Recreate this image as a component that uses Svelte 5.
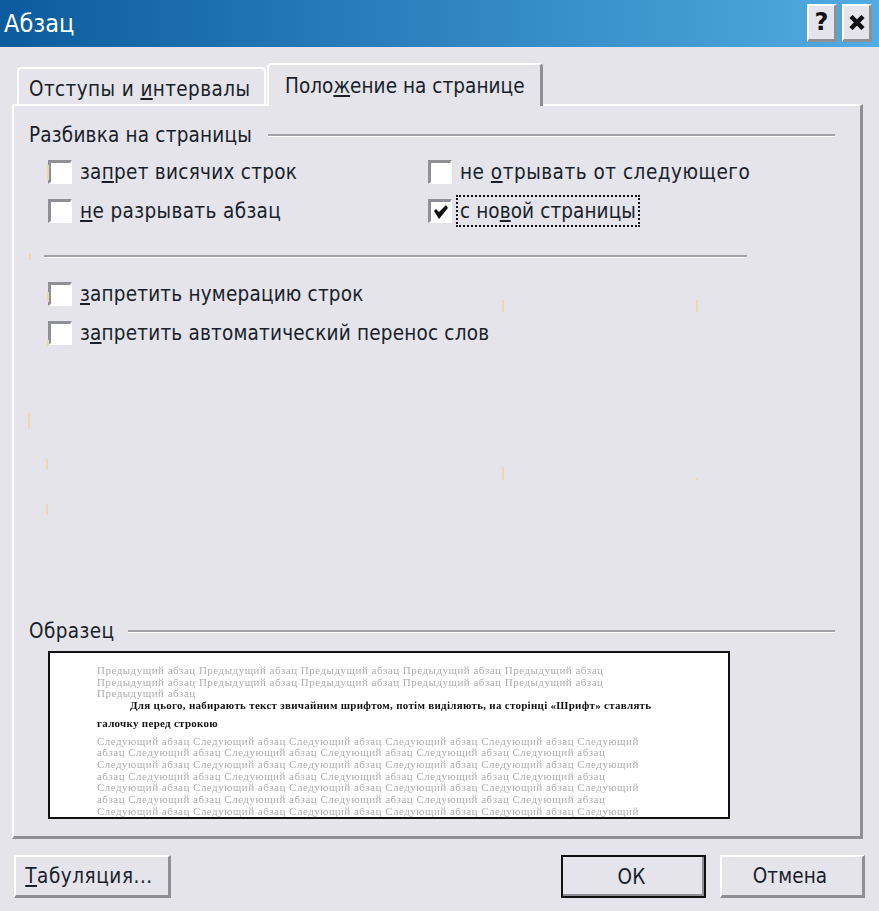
<script>
	const marks = [
		[47, 165, 15], [29, 254, 6], [47, 292, 10], [47, 340, 6], [502, 300, 12], [696, 300, 12],
		[28, 413, 16], [46, 459, 11], [46, 504, 11], [502, 467, 13], [696, 478, 2]
	];
	const prev = 'Предыдущий абзац';
	const next = 'Следующий абзац';
	const prevLines = [Array(5).fill(prev).join(' '), Array(5).fill(prev).join(' '), prev];
	const longLine = Array(5).fill(next).join(' ') + ' Следующий';
	const shortLine = 'абзац ' + Array(5).fill(next).join(' ');
	const nextLines = [longLine, shortLine, longLine, shortLine, longLine, shortLine, longLine];
</script>

<div class="dialog">
	<header class="titlebar">
		<span class="title">Абзац</span>
		<div class="caption-buttons">
			<button class="caption-btn help">?</button>
			<button class="caption-btn close" aria-label="Закрыть">
				<svg width="18" height="15" viewBox="0 0 18 15"><path d="M3 1.500l12 12M15 1.500l-12 12" fill="none" stroke="#111" stroke-width="4.500" /></svg>
			</button>
		</div>
	</header>

	<div class="tabs">
		<div class="tab">Отступы и <u>и</u>нтервалы</div>
		<div class="tab active">Поло<u>ж</u>ение на странице</div>
	</div>

	<section class="panel">
		<div class="legend first"><span>Разбивка на страницы</span><i class="rule"></i></div>
		<div class="check-grid">
			<label class="check"><span class="box"></span><span>за<u>п</u>рет висячих строк</span></label>
			<label class="check"><span class="box"></span><span class="wide">не <u>о</u>трывать от следующего</span></label>
			<label class="check"><span class="box"></span><span class="mid"><u>н</u>е разрывать абзац</span></label>
			<label class="check">
				<span class="box">
					<svg width="16" height="16" viewBox="0 0 16 16"><path d="M1 7l2-2 3 3 7-7 2 3-9 11z" fill="#111" /></svg>
				</span>
				<span class="focus">с но<u>в</u>ой страницы</span>
			</label>
		</div>
		<i class="rule separator"></i>
		<div class="check-list">
			<label class="check"><span class="box"></span><span><u>з</u>апретить нумерацию строк</span></label>
			<label class="check"><span class="box"></span><span>з<u>а</u>претить автоматический перенос слов</span></label>
		</div>

		<div class="legend sample"><span>Образец</span><i class="rule"></i></div>
		<div class="preview">
			{#each prevLines as line}
				<div class="line grey">{line}</div>
			{/each}
			<div class="line body indent">Для цього, набирають текст звичайним шрифтом, потім виділяють, на сторінці «Шрифт» ставлять</div>
			<div class="line body last">галочку перед строкою</div>
			{#each nextLines as line}
				<div class="line grey">{line}</div>
			{/each}
		</div>
	</section>

	<footer class="actions">
		<button class="btn tabs-btn"><u>Т</u>абуляция...</button>
		<div class="spacer"></div>
		<button class="btn default">ОК</button>
		<button class="btn">Отмена</button>
	</footer>

	{#each marks as [x, y, h]}
		<i class="mark" style="left:{x}px;top:{y}px;height:{h}px"></i>
	{/each}
</div>

<style>
	:global(body) {
		background: #e4e4ea;
	}

	.dialog {
		position: relative;
		width: 879px;
		height: 911px;
		overflow: hidden;
		display: flex;
		flex-direction: column;
		background: #e4e4ea;
		color: #1a1f2b;
		font-family: 'DejaVu Sans', 'Liberation Sans', sans-serif;
		font-stretch: condensed;
		font-size: 20.5px;
	}

	.titlebar {
		height: 47px;
		flex: none;
		display: flex;
		align-items: center;
		justify-content: space-between;
		padding: 0 7px 0 4px;
		box-sizing: border-box;
		background: linear-gradient(90deg, #0b5c9e, #52abe1);
	}

	.title {
		color: #fff;
		font-size: 25px;
	}

	.caption-buttons {
		display: flex;
		gap: 5px;
		position: relative;
		top: -1px;
	}

	.caption-btn {
		width: 30px;
		height: 38px;
		padding: 0;
		box-sizing: border-box;
		display: flex;
		align-items: center;
		justify-content: center;
		background: #e4e4ea;
		border: solid;
		border-width: 2px 3px 3px 2px;
		border-color: #fff #8f9096 #8f9096 #fff;
		font-family: 'DejaVu Sans', sans-serif;
		font-weight: 700;
		font-size: 24px;
		color: #111;
	}

	.tabs {
		height: 59px;
		flex: none;
		display: flex;
		align-items: flex-end;
		padding-left: 17px;
		position: relative;
		z-index: 1;
		margin-bottom: -2px;
	}

	.tab {
		height: 37px;
		width: 249px;
		box-sizing: border-box;
		padding: 8px 0 0 10px;
		border: solid #fff;
		border-width: 2px 2px 0 2px;
		border-radius: 4px 4px 0 0;
		margin-bottom: 2px;
		letter-spacing: 0.4px;
	}

	.tab.active {
		height: 43px;
		width: 276px;
		padding: 9px 0 0 16px;
		margin: 0 0 0 1px;
		background: #e4e4ea;
		border-right: 3px solid #8f9096;
		letter-spacing: 0.05px;
	}

	.panel {
		margin: 0 16px 0 12px;
		height: 735px;
		flex: none;
		box-sizing: border-box;
		padding: 17px 25px 0 15px;
		border: solid;
		border-width: 2px 3px 3px 2px;
		border-color: #fff #8f9096 #8f9096 #fff;
	}

	.legend {
		display: flex;
		align-items: center;
		gap: 16px;
		height: 24px;
		letter-spacing: 0.2px;
	}

	.sample {
		gap: 14px;
		letter-spacing: 0.4px;
		margin-top: 273px;
	}

	.rule {
		display: block;
		flex: 1;
		height: 2px;
		background: #a1a1a8;
		border-bottom: 1px solid #fff;
	}

	.check-grid {
		display: grid;
		grid-template-columns: 380px 1fr;
		row-gap: 13px;
		margin: 12px 0 0 19px;
	}

	.check-list {
		display: flex;
		flex-direction: column;
		gap: 13px;
		margin: 23px 0 0 19px;
	}

	.check {
		height: 26px;
		display: flex;
		align-items: center;
		gap: 8px;
		letter-spacing: 0.28px;
	}

	.check-list .check {
		letter-spacing: 0.2px;
	}

	.wide {
		letter-spacing: 0.52px;
	}

	.mid {
		letter-spacing: 0.38px;
	}

	.box {
		width: 24px;
		height: 24px;
		flex: none;
		box-sizing: border-box;
		display: flex;
		align-items: center;
		justify-content: center;
		background: #fff;
		border: solid;
		border-width: 3px 2px 2px 3px;
		border-color: #8f9096 #fff #fff #8f9096;
	}

	.focus {
		outline: 2px dotted #111;
		outline-offset: 2px;
		letter-spacing: 0.1px;
	}

	.separator {
		flex: none;
		margin: 31px 88px 0 15px;
		width: auto;
	}

	.preview {
		margin: 8px 0 0 19px;
		width: 682px;
		height: 168px;
		box-sizing: border-box;
		padding: 12px 0 0 47px;
		overflow: hidden;
		background: #fff;
		border: 2px solid #111;
		font-family: 'Liberation Serif', serif;
		font-stretch: normal;
		font-size: 11px;
		line-height: 11.700px;
		white-space: nowrap;
	}

	.grey {
		color: #aeaeae;
		letter-spacing: 0.49px;
		filter: blur(0.3px);
	}

	.body {
		color: #111;
		font-weight: 700;
		letter-spacing: 0.28px;
		filter: blur(0.2px);
	}

	.indent {
		margin-left: 33px;
	}

	.last {
		margin: 6px 0 6px;
	}

	.actions {
		display: flex;
		gap: 14px;
		padding: 16px 14px 0 14px;
	}

	.spacer {
		flex: 1;
	}

	.btn {
		width: 145px;
		height: 43px;
		padding: 0 4px 0 0;
		box-sizing: border-box;
		background: #e4e4ea;
		border: solid;
		border-width: 2px 3px 3px 2px;
		border-color: #fff #8f9096 #8f9096 #fff;
		color: inherit;
		font: inherit;
		letter-spacing: 0.1px;
	}

	.tabs-btn {
		width: 157px;
		padding-right: 6px;
		letter-spacing: 0.55px;
	}

	.btn.default {
		border: 2px solid #111;
		box-shadow: inset -2px -2px 0 #8f9096;
	}

	.mark {
		position: absolute;
		width: 2px;
		background: #ecd9b0;
	}
</style>
